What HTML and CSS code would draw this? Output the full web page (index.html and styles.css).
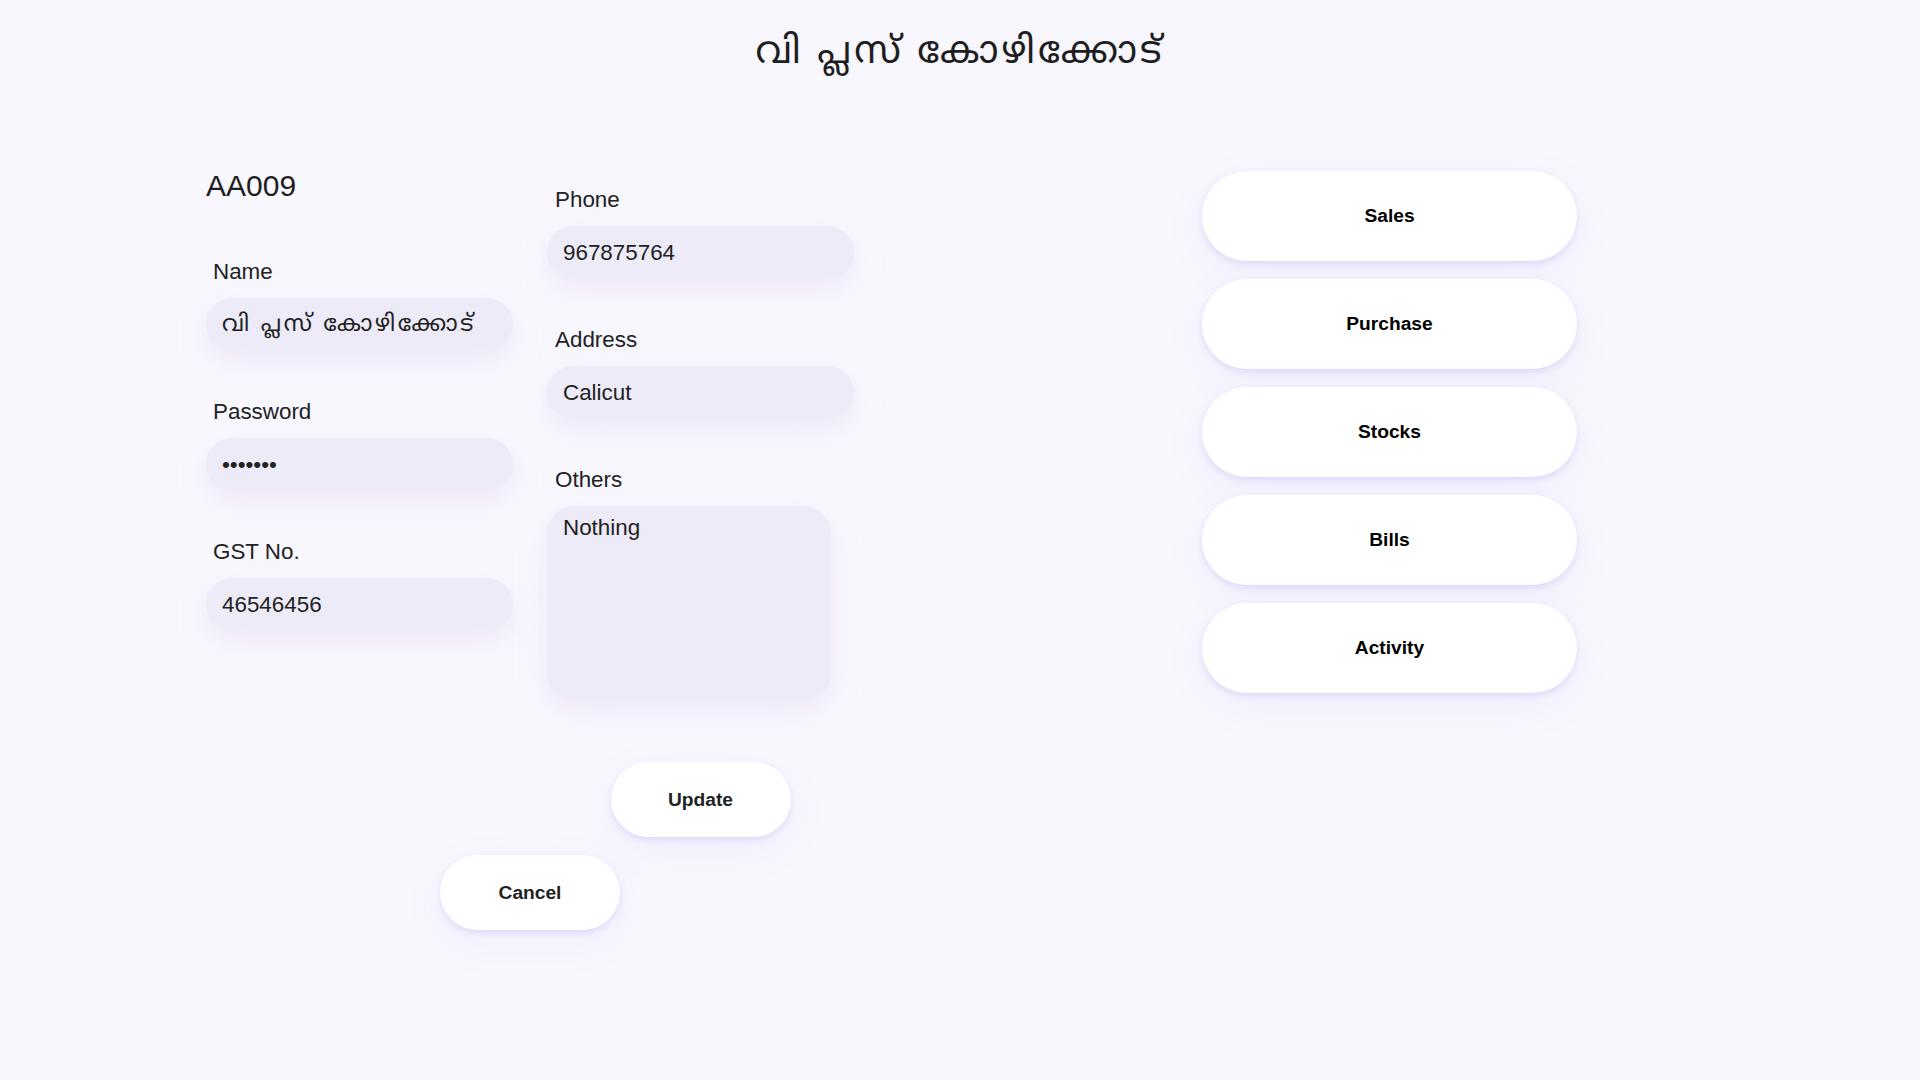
FILE: index.html
```html
<!DOCTYPE html>
<html lang="ml">
<head>
<meta charset="utf-8">
<title>വി പ്ലസ് കോഴിക്കോട്</title>
<link rel="stylesheet" href="styles.css">
</head>
<body>
<header class="top">
  <h1 class="title">വി പ്ലസ് കോഴിക്കോട്</h1>
</header>
<main class="page">
  <section class="form-area">
    <div class="cols">
      <div class="col col-left">
        <div class="code">AA009</div>
        <div class="field">
          <label class="label">Name</label>
          <input class="input ml" type="text" value="വി പ്ലസ് കോഴിക്കോട്">
        </div>
        <div class="field">
          <label class="label">Password</label>
          <input class="input" type="password" value="1234567">
        </div>
        <div class="field">
          <label class="label">GST No.</label>
          <input class="input" type="text" value="46546456">
        </div>
      </div>
      <div class="col col-right">
        <div class="field">
          <label class="label">Phone</label>
          <input class="input" type="text" value="967875764">
        </div>
        <div class="field">
          <label class="label">Address</label>
          <input class="input" type="text" value="Calicut">
        </div>
        <div class="field field-last">
          <label class="label">Others</label>
          <textarea class="textarea">Nothing</textarea>
        </div>
        <div class="update-row">
          <button class="btn small">Update</button>
        </div>
      </div>
    </div>
    <div class="cancel-row">
      <button class="btn small">Cancel</button>
    </div>
  </section>
  <nav class="menu">
    <button class="btn big">Sales</button>
    <button class="btn big">Purchase</button>
    <button class="btn big">Stocks</button>
    <button class="btn big">Bills</button>
    <button class="btn big">Activity</button>
  </nav>
</main>
</body>
</html>
```
FILE: styles.css
```css
* { box-sizing: border-box; }

html, body {
  margin: 0;
  padding: 0;
}

body {
  background: #f8f7fe;
  color: #222;
  font-family: "Liberation Sans", Arial, "Noto Sans Malayalam", "Lohit Malayalam", sans-serif;
  min-height: 1080px;
}

.top {
  display: flex;
  justify-content: center;
  padding-top: 22px;
  height: 110px;
}

.title {
  margin: 0;
  font-size: 38px;
  font-weight: 400;
  line-height: 56px;
  letter-spacing: 3px;
  color: #1e1e1e;
}

.page {
  display: flex;
  align-items: flex-start;
  padding-left: 206px;
  padding-top: 59px;
}

.form-area {
  width: 648px;
  display: flex;
  flex-direction: column;
}

.cols {
  display: flex;
  gap: 34px;
  align-items: flex-start;
}

.col {
  width: 307px;
  display: flex;
  flex-direction: column;
}

.col-right {
  margin-top: 18px;
}

.code {
  font-size: 30px;
  line-height: 34px;
  height: 34px;
  margin-bottom: 56px;
  color: #1e1e1e;
}

.field {
  display: flex;
  flex-direction: column;
  margin-bottom: 48px;
}

.field-last {
  margin-bottom: 0;
}

.label {
  font-size: 22.4px;
  line-height: 26px;
  height: 26px;
  margin-bottom: 13px;
  padding-left: 7px;
}

.col-right .label {
  padding-left: 8px;
}

.input, .textarea {
  font-family: "Liberation Sans", Arial, "Noto Sans Malayalam", "Lohit Malayalam", sans-serif;
  font-size: 22.4px;
  color: #222;
  background: #edebf8;
  border: none;
  outline: none;
  box-shadow: 0 8px 18px rgba(235, 205, 230, 0.22), 0 12px 40px rgba(200, 190, 240, 0.12);
}

.input {
  width: 307px;
  height: 53px;
  border-radius: 27px;
  padding: 0 16px;
}

.input.ml {
  font-size: 23px;
  letter-spacing: 2.5px;
}

.textarea {
  width: 284px;
  height: 195px;
  border-radius: 28px;
  padding: 9px 16px;
  resize: none;
  line-height: 26px;
}

.update-row {
  display: flex;
  justify-content: center;
  margin-top: 61px;
}

.cancel-row {
  display: flex;
  justify-content: center;
  margin-top: 18px;
}

.btn {
  font-family: "Liberation Sans", Arial, sans-serif;
  font-weight: 700;
  font-size: 19.2px;
  background: #fff;
  border: none;
  cursor: pointer;
  box-shadow: 0 3px 6px rgba(120, 110, 230, 0.16), 0 12px 40px rgba(140, 130, 230, 0.08);
}

.btn.small {
  width: 180px;
  height: 75px;
  border-radius: 38px;
  color: #222;
}

.menu {
  margin-left: 348px;
  padding-top: 2px;
  display: flex;
  flex-direction: column;
  gap: 18px;
  width: 375px;
}

.btn.big {
  width: 375px;
  height: 90px;
  border-radius: 45px;
  color: #000;
}
```
